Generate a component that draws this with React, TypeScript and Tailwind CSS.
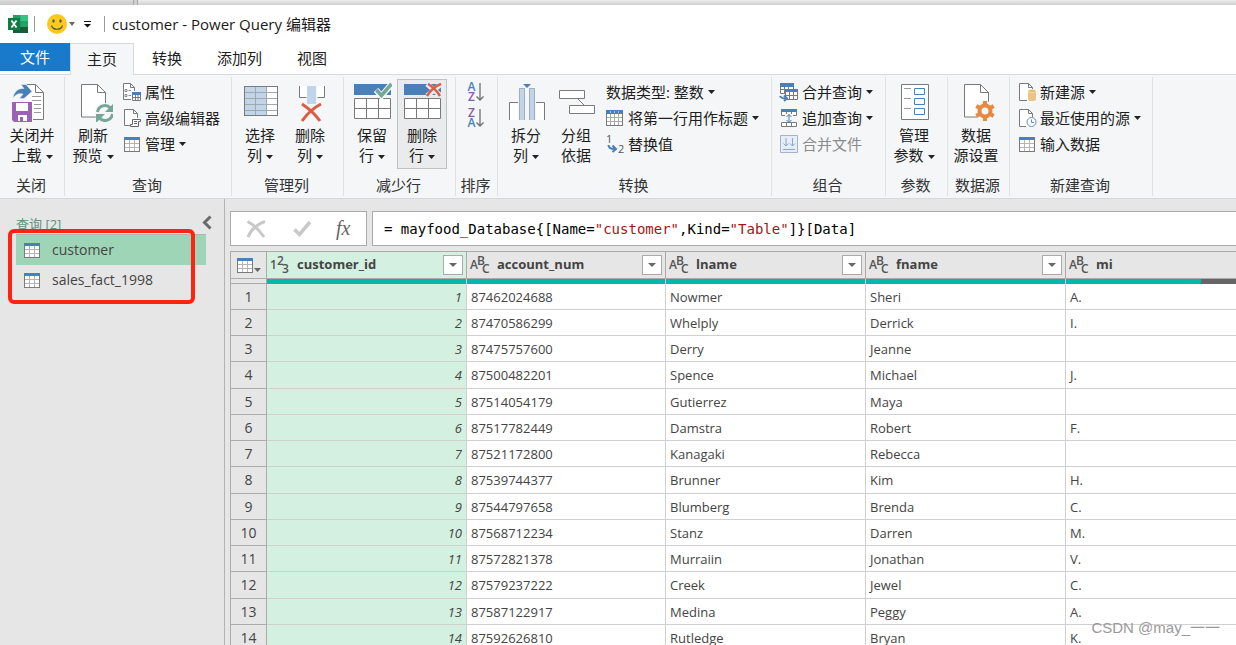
import type { ReactNode } from "react"

const GRAY = "#7a7a7a"
const BLUE = "#4a7fb8"
const LIGHT_BLUE = "#c0d4ea"
const GREEN = "#74a795"
const RED = "#d95f43"

interface IconProps {
  children: ReactNode;
}

function BigIcon({ children }: IconProps) {
  return (
    <svg className="w-10 h-10 shrink-0" viewBox="0 0 40 40" fill="none" aria-hidden="true">
      {children}
    </svg>
  )
}

function SmallIcon({ children }: IconProps) {
  return (
    <svg className="w-[18px] h-[18px] shrink-0 overflow-visible" viewBox="0 0 18 18" fill="none" aria-hidden="true">
      {children}
    </svg>
  )
}

function Caret() {
  return (
    <svg className="inline-block w-[7px] h-1 ml-1 shrink-0 align-middle" viewBox="0 0 7 4" aria-hidden="true">
      <path d="M0 0h7L3.5 4z" fill="#222" />
    </svg>
  )
}

function TableGlyph() {
  return (
    <SmallIcon>
      <rect x="1.5" y="2.5" width="15" height="14" fill="#fff" />
      <path d="M6.5 5v11M11.5 5v11M2 8.5h14M2 12.5h14" stroke="#b4b4b4" />
      <rect x="1.5" y="2.5" width="15" height="14" stroke={GRAY} />
      <path d="M1 2h16v3H1z" fill={BLUE} />
    </SmallIcon>
  )
}

const icons = {
  closeLoad: (
    <BigIcon>
      <path d="M6 2.500h17.500l8 8V37.500H12V2.500z" fill="#fff" />
      <path d="M15 2.500h8.500l8 8V37.500H21" stroke={GRAY} />
      <path d="M23.500 2.500v8h8" stroke={GRAY} />
      <path d="M20 14.500h9M20 18.500h9M22 22.500h7M22 26.500h7M22 30.500h7" stroke="#9a9a9a" />
      <path d="M1 16C2 9 7 6 12 6.500L9 2.500h5l6 7-8 7H7.500L11 12C7 11 4 12 1 16z" fill={BLUE} stroke="#f4f6f8" strokeWidth=".5" />
      <path d="M0 20h20v20H2l-2-2z" fill="#9b62b5" />
      <path d="M4 21h12v8H4zM6 33h9v6H6z" fill="#fff" />
      <path d="M8 35h3v4H8z" fill="#9b62b5" />
    </BigIcon>
  ),
  refresh: (
    <BigIcon>
      <path d="M8.500 2.500h16l8 8v24.500h-24z" fill="#fff" stroke={GRAY} />
      <path d="M24.500 2.500v8h8" stroke={GRAY} />
      <circle cx="32" cy="31" r="10" fill="#f4f6f8" />
      <path d="M24.500 30a7.500 7.500 0 0 1 13-4M39.500 32a7.500 7.500 0 0 1-13 4" stroke={GREEN} strokeWidth="3" />
      <path d="M41 21v9h-9zM23 41v-9h9z" fill={GREEN} />
    </BigIcon>
  ),
  chooseColumns: (
    <BigIcon>
      <rect x="4.500" y="4.500" width="33" height="29" fill="#fff" />
      <path d="M5 5h21v28H5z" fill={LIGHT_BLUE} />
      <path d="M15.500 5v28M26.500 5v28M5 10.500h32M5 16.500h32M5 22.500h32M5 28.500h32" stroke="#a3a8ad" />
      <rect x="4.500" y="4.500" width="33" height="29" stroke={GRAY} />
    </BigIcon>
  ),
  removeColumns: (
    <BigIcon>
      <path d="M9 4h8v12H9zM27 4h8v12h-8z" fill="#fff" />
      <path d="M9.500 4v11.500h7M34.500 4v11.500h-7" stroke={GRAY} />
      <path d="M17 4h9v18h-9z" fill={LIGHT_BLUE} />
      <path d="M12 22c6 4 13 10 18 17M31 22c-8 4-14 10-19 17" stroke={RED} strokeWidth="3" />
    </BigIcon>
  ),
  keepRows: (
    <BigIcon>
      <path d="M2 2h37v11H2z" fill={BLUE} />
      <path d="M2.500 16.500h36v20h-36zM14.500 17v19M26.500 17v19M3 26.500h35" fill="#fff" stroke={GRAY} />
      <path d="M24 8l5.500 6L40 1.500" stroke="#f4f6f8" strokeWidth="6" />
      <path d="M24.500 8l5 5.500L39.500 2" stroke={GREEN} strokeWidth="3.500" />
    </BigIcon>
  ),
  removeRows: (
    <BigIcon>
      <path d="M2 2h37v11H2z" fill={BLUE} />
      <path d="M2.500 16.500h36v20h-36zM14.500 17v19M26.500 17v19M3 26.500h35" fill="#fff" stroke={GRAY} />
      <path d="M25 2l14 12M39 2L25 14" stroke="#ebecee" strokeWidth="5" />
      <path d="M26 2c5 3 9 7 12 12M39 2C33 4 28 9 25 14" stroke={RED} strokeWidth="2.500" />
    </BigIcon>
  ),
  split: (
    <BigIcon>
      <path d="M3.500 38V20.500H12V38M38.500 38V20.500H30V38" fill="#fff" />
      <path d="M3.500 38V20.500H12M38.500 38V20.500H30" stroke={GRAY} />
      <path d="M13 6h6v32h-6zM23 6h6v32h-6z" fill={LIGHT_BLUE} />
      <path d="M13.500 38V6.500h5V38M23.500 38V6.500h5V38" stroke="#a3adb8" />
      <path d="M17 2h8l-4 4z" fill={BLUE} />
    </BigIcon>
  ),
  group: (
    <BigIcon>
      <path d="M3.500 8.500h25v8h-25zM13.500 23.500h25v8h-25z" fill="#fff" stroke={GRAY} />
      <path d="M21.500 16.500l7 7" stroke={GRAY} />
    </BigIcon>
  ),
  params: (
    <BigIcon>
      <path d="M7.500 2.500h27v35h-27z" fill="#fff" stroke={GRAY} />
      <path d="M10 6.500h7M10 16.500h7M10 26.500h7" stroke="#9a9a9a" />
      <path d="M20.500 6.500h10v6h-10zM20.500 16.500h10v6h-10zM20.500 26.500h10v6h-10z" stroke={BLUE} />
    </BigIcon>
  ),
  sourceSettings: (
    <BigIcon>
      <path d="M8.500 2.500h16l8 8v24.500h-24z" fill="#fff" stroke={GRAY} />
      <path d="M24.500 2.500v8h8" stroke={GRAY} />
      <circle cx="29" cy="29" r="10" fill="#f4f6f8" />
      <circle cx="29" cy="29" r="5.500" stroke="#e8893f" strokeWidth="4" />
      <path d="M29 19v4M29 35v4M20.300 24l3.500 2M34.200 32l3.500 2M20.300 34l3.500-2M34.200 26l3.500-2" stroke="#e8893f" strokeWidth="4" />
    </BigIcon>
  ),
  properties: (
    <SmallIcon>
      <path d="M.5.500h7l4 4V16H.500z" fill="#fff" />
      <path d="M8 16.500H.500V.500h7l4 4V8M7.500.500v4h4" stroke={GRAY} />
      <path d="M2 6.500h2v2H2zM2 11.500h2v2H2zM5.500 7.500H8M5.500 12.500H8" stroke="#8a8a8a" />
      <path d="M9.500 9.500h8v8h-8zM12.500 11v6M15 11v6M10 14.500h8" fill="#fff" stroke={GRAY} />
      <path d="M9 9h9v3H9z" fill={BLUE} />
    </SmallIcon>
  ),
  editor: (
    <SmallIcon>
      <path d="M1.500.500h9l4 4V17h-13z" fill="#fff" />
      <path d="M7 16.500H1.500V.500h9l4 4V9M10.500.500v4h4" stroke={GRAY} />
      <path d="M9.500 10.500h8v2h-2v5h-8v-2h2z" fill="#fff" stroke="#666" />
      <path d="M11 12.500h3M11 14.500h3" stroke="#666" />
    </SmallIcon>
  ),
  firstRow: (
    <SmallIcon>
      <rect x=".5" y="1.500" width="16" height="15" fill="#fff" />
      <path d="M4.500 5v11M8.500 5v11M12.500 5v11M1 8.500h15M1 12.500h15" stroke="#aaa" />
      <rect x=".5" y="1.500" width="16" height="15" stroke={GRAY} />
      <path d="M0 1h17v4H0z" fill={BLUE} />
      <path d="M4.500 2v2M8.500 2v2M12.500 2v2" stroke="#fff" opacity=".5" />
    </SmallIcon>
  ),
  replace: (
    <SmallIcon>
      <text x="0" y="8" fontSize="11" fill="#555">1</text>
      <text x="12" y="18" fontSize="11" fill="#555">2</text>
      <path d="M2.500 10c0 3 2 4 6 4M6.500 10.500l3.500 3.500-3.500 3" stroke={BLUE} strokeWidth="2" />
    </SmallIcon>
  ),
  merge: (
    <SmallIcon>
      <path d="M.5.500h13v10H.500zM4.500 3v8M8.500 3v8M1 6.500h12" fill="#fff" stroke={GRAY} />
      <path d="M0 0h14v4H0z" fill={BLUE} />
      <path d="M5.500 6.500h12v10h-12zM9.500 9v7M13.500 9v7M6 12.500h12" fill="#fff" stroke={GRAY} />
      <path d="M5 6h13v3H5z" fill={BLUE} />
      <path d="M0 13c1 2.500 3 2.500 6 2.500M4 12.500l3 3-3 2.500" stroke={BLUE} strokeWidth="2" />
    </SmallIcon>
  ),
  append: (
    <SmallIcon>
      <path d="M1.500.500h15v6h-15zM1.500 13.500h15v4h-15zM6.500 13.500v4M11.500 13.500v4M6.500 3v3M11.500 3v3" fill="#fff" stroke={GRAY} />
      <path d="M1 0h16v3H1z" fill={BLUE} />
      <path d="M5 5h8v8H5z" fill="#f4f6f8" />
      <path d="M9 5.500v8M6.500 8L9 5.500 11.500 8M6.500 11L9 13.500l2.500-2.500" stroke={BLUE} />
    </SmallIcon>
  ),
  combine: (
    <SmallIcon>
      <path d="M.5.500h17v17H.500z" fill="#e6edf7" stroke="#a3b1c9" />
      <path d="M3 14.500h12M6 3v8M3.500 8.500L6 11l2.500-2.500M12.500 3v8M10 8.500l2.500 2.500L15 8.500" stroke="#8ea5cd" />
    </SmallIcon>
  ),
  newSource: (
    <SmallIcon>
      <path d="M1.500.500h9l4 4V17h-13z" fill="#fff" />
      <path d="M9 17.500H1.500V.500h9l4 4V6M10.500.500v4h4" stroke={GRAY} />
      <path d="M10 8v8.500c0 2 8 2 8 0V8z" fill="#ecc584" />
      <ellipse cx="14" cy="8" rx="4" ry="1.500" fill="#e9b765" stroke="#fbeed8" strokeWidth=".6" />
    </SmallIcon>
  ),
  recent: (
    <SmallIcon>
      <path d="M1.500.500h9l4 4V17h-13z" fill="#fff" />
      <path d="M8 17.500H1.500V.500h9l4 4V8M10.500.500v4h4" stroke={GRAY} />
      <circle cx="13.500" cy="13" r="4.500" fill="#fff" stroke="#5f8fc2" />
      <path d="M13.500 10.500V13.500H16" stroke="#5f8fc2" />
    </SmallIcon>
  ),
}

interface SortButtonProps {
  letters: string[];
  label: string;
}

function SortButton({ letters, label }: SortButtonProps) {
  return (
    <button aria-label={label} className="flex items-center h-[26px]">
      <span className="flex flex-col w-[9px] text-[12px] leading-[10px] font-semibold">
        {letters.map((letter) => (
          <span key={letter} className={letter === "A" ? "text-[#4a7fb8]" : "text-[#8a58ad]"}>{letter}</span>
        ))}
      </span>
      <svg className="w-2 h-5" viewBox="0 0 8 20" fill="none" aria-hidden="true">
        <path d="M4 1v17M.5 14.500L4 18l3.500-3.500" stroke="#707070" strokeWidth="1.300" />
      </svg>
    </button>
  )
}

interface BigButtonProps {
  icon: ReactNode;
  lines: string[];
  menu?: boolean;
  active?: boolean;
  wide?: boolean;
}

function BigButton({ icon, lines, menu, active, wide }: BigButtonProps) {
  return (
    <button
      className={`flex flex-col items-center h-[90px] pt-[2px] border leading-5 ${wide ? "w-[58px]" : "w-[50px]"} ${
        active ? "border-[#bfc1c3] bg-[#eaebed]" : "border-transparent"
      }`}
    >
      {icon}
      <span className="mt-[3px] whitespace-nowrap">{lines[0]}</span>
      <span className="whitespace-nowrap">
        {lines[1]}
        {menu && <Caret />}
      </span>
    </button>
  )
}

interface SmallButtonProps {
  icon?: ReactNode;
  label: string;
  menu?: boolean;
  disabled?: boolean;
}

function SmallButton({ icon, label, menu, disabled }: SmallButtonProps) {
  return (
    <button
      disabled={disabled}
      className={`flex items-center h-[26px] px-[5px] whitespace-nowrap ${disabled ? "text-[#8b8b8b]" : ""}`}
    >
      {icon && <span className="mr-1">{icon}</span>}
      {label}
      {menu && <Caret />}
    </button>
  )
}

interface GroupProps {
  title: string;
  width: string;
  children: ReactNode;
}

function Group({ title, width, children }: GroupProps) {
  return (
    <section className={`flex flex-col justify-between shrink-0 my-[2px] border-r border-[#dfe1e3] ${width}`}>
      <div className="flex items-start pt-[2px] pl-[3px]">{children}</div>
      <h2 className="h-[22px] pr-[2px] text-center leading-[22px] text-[#333] whitespace-nowrap">{title}</h2>
    </section>
  )
}

function Column({ children }: IconProps) {
  return <div className="flex flex-col items-start">{children}</div>
}

function Ribbon() {
  return (
    <div className="flex h-[124px] shrink-0 bg-[#f4f6f8] border-b border-[#d5d9dd] text-[#1e1e1e]">
      <Group title="关闭" width="w-[65px]">
        <BigButton icon={icons.closeLoad} lines={["关闭并", "上载"]} menu wide />
      </Group>
      <Group title="查询" width="w-[167px]">
        <BigButton icon={icons.refresh} lines={["刷新", "预览"]} menu />
        <Column>
          <SmallButton icon={icons.properties} label="属性" />
          <SmallButton icon={icons.editor} label="高级编辑器" />
          <SmallButton icon={<TableGlyph />} label="管理" menu />
        </Column>
      </Group>
      <Group title="管理列" width="w-[112px]">
        <BigButton icon={icons.chooseColumns} lines={["选择", "列"]} menu />
        <BigButton icon={icons.removeColumns} lines={["删除", "列"]} menu />
      </Group>
      <Group title="减少行" width="w-[112px]">
        <BigButton icon={icons.keepRows} lines={["保留", "行"]} menu />
        <BigButton icon={icons.removeRows} lines={["删除", "行"]} menu active />
      </Group>
      <Group title="排序" width="w-[42px]">
        <div className="flex flex-col pl-2">
          <SortButton letters={["A", "Z"]} label="升序排序" />
          <SortButton letters={["Z", "A"]} label="降序排序" />
        </div>
      </Group>
      <Group title="转换" width="w-[274px]">
        <BigButton icon={icons.split} lines={["拆分", "列"]} menu />
        <BigButton icon={icons.group} lines={["分组", "依据"]} />
        <Column>
          <SmallButton label="数据类型: 整数" menu />
          <SmallButton icon={icons.firstRow} label="将第一行用作标题" menu />
          <SmallButton icon={icons.replace} label="替换值" />
        </Column>
      </Group>
      <Group title="组合" width="w-[114px]">
        <Column>
          <SmallButton icon={icons.merge} label="合并查询" menu />
          <SmallButton icon={icons.append} label="追加查询" menu />
          <SmallButton icon={icons.combine} label="合并文件" disabled />
        </Column>
      </Group>
      <Group title="参数" width="w-[62px]">
        <BigButton icon={icons.params} lines={["管理", "参数"]} menu />
      </Group>
      <Group title="数据源" width="w-[62px]">
        <BigButton icon={icons.sourceSettings} lines={["数据", "源设置"]} />
      </Group>
      <Group title="新建查询" width="w-[143px]">
        <Column>
          <SmallButton icon={icons.newSource} label="新建源" menu />
          <SmallButton icon={icons.recent} label="最近使用的源" menu />
          <SmallButton icon={<TableGlyph />} label="输入数据" />
        </Column>
      </Group>
    </div>
  )
}

function TitleBar() {
  return (
    <header className="flex items-center h-[38px] shrink-0 pl-2 bg-white">
      <svg className="w-5 h-5" viewBox="0 0 20 20" aria-hidden="true">
        <path d="M5 1h15v18H5z" fill="#21a366" />
        <path d="M12.500 1H20v6h-7.500z" fill="#33c481" />
        <path d="M5 7h7.500v6H5z" fill="#107c41" />
        <path d="M5 13h15v6H5z" fill="#185c37" />
        <path d="M12.500 7H20v6h-7.500z" fill="#21a366" />
        <path d="M0 4h12v12H0z" fill="#107c41" />
        <path d="M3.500 6.500l5 7M8.500 6.500l-5 7" stroke="#fff" strokeWidth="1.800" />
      </svg>
      <span className="w-px h-4 ml-[6px] bg-[#9b9b9b]" />
      <button aria-label="反馈" className="flex items-center ml-3">
        <svg className="w-5 h-5" viewBox="0 0 20 20" aria-hidden="true">
          <circle cx="10" cy="10" r="10" fill="#fcca1b" />
          <ellipse cx="6.500" cy="7" rx="1.200" ry="1.700" fill="#555" />
          <ellipse cx="13.500" cy="7" rx="1.200" ry="1.700" fill="#555" />
          <path d="M4.500 11.500c1.500 5 9.500 5 11 0" fill="none" stroke="#555" strokeWidth="1.200" />
        </svg>
        <svg className="w-[6px] h-1 ml-[2px]" viewBox="0 0 6 4" aria-hidden="true"><path d="M0 0h6L3 4z" fill="#666" /></svg>
      </button>
      <button aria-label="自定义快速访问工具栏" className="ml-[9px]">
        <svg className="w-2 h-2" viewBox="0 0 8 8" aria-hidden="true">
          <path d="M0 1.500h7" stroke="#111" />
          <path d="M0 4h7L3.500 7.500z" fill="#111" />
        </svg>
      </button>
      <span className="w-px h-4 ml-3 bg-[#9b9b9b]" />
      <h1 className="ml-[7px] text-[15px] text-[#1a1a1a]">customer - Power Query 编辑器</h1>
    </header>
  )
}

const tabs = ["转换", "添加列", "视图"]

function Tabs() {
  return (
    <nav className="flex h-8 shrink-0 bg-white text-[#1e1e1e]">
      <div className="w-[70px] border-b border-[#d8dadc]">
        <button className="w-full h-7 bg-[#1979ca] text-white">文件</button>
      </div>
      <button className="w-16 border border-b-0 border-[#d8dadc] bg-[#f4f6f8]">主页</button>
      <div className="flex flex-1 border-b border-[#d8dadc] pl-[18px] gap-[35px]">
        {tabs.map((tab) => (
          <button key={tab}>{tab}</button>
        ))}
      </div>
    </nav>
  )
}

const queries = ["customer", "sales_fact_1998"]

function QueryPane() {
  return (
    <aside className="relative w-[225px] shrink-0 border-r border-[#b3b3b3]">
      <div className="flex justify-between h-[35px] pt-[14px] pl-4 pr-3">
        <h2 className="text-[13px] leading-[22px] text-[#5f9078]">查询 [2]</h2>
        <button aria-label="折叠" className="self-start mt-[2px]">
          <svg className="w-[10px] h-[15px]" viewBox="0 0 10 15" fill="none" aria-hidden="true">
            <path d="M8.500 1.500L2.500 7.500l6 6" stroke="#6a6a6a" strokeWidth="3" />
          </svg>
        </button>
      </div>
      <ul className="ml-4 mr-[18px] border-t border-[#b3b3b3] text-sm text-[#444]">
        {queries.map((name, i) => (
          <li key={name}>
            <button className={`flex items-center w-full h-[30px] pl-[7px] ${i === 0 ? "bg-[#9fd5b7]" : ""}`}>
              <TableGlyph />
              <span className="ml-[11px] leading-[30px]">{name}</span>
            </button>
          </li>
        ))}
      </ul>
      <div className="absolute left-2 top-[30px] w-[187px] h-[75px] border-4 border-[#ff2311] rounded-md pointer-events-none" />
    </aside>
  )
}

function FormulaBar() {
  return (
    <div className="flex h-[35px] gap-[5px]">
      <div className="flex items-center w-[137px] shrink-0 border border-[#ababab] bg-white pl-[15px]">
        <button aria-label="取消">
          <svg className="w-5 h-5" viewBox="0 0 20 20" fill="none" aria-hidden="true">
            <path d="M1.500 2.500C8 6 14 12 18 18M19 2.500C11 5 5 11 2 18" stroke="#c8c8c8" strokeWidth="3" />
          </svg>
        </button>
        <button aria-label="提交" className="ml-[27px]">
          <svg className="w-5 h-5" viewBox="0 0 20 20" fill="none" aria-hidden="true">
            <path d="M1.500 10.500l5 5L17 3" stroke="#c8c8c8" strokeWidth="3.500" />
          </svg>
        </button>
        <button aria-label="插入步骤" className="ml-[23px] pb-[2px] font-['Liberation_Serif',serif] italic text-[20px] leading-6 text-[#666]">fx</button>
      </div>
      <div
        role="textbox"
        aria-label="公式"
        contentEditable
        suppressContentEditableWarning
        className="flex-1 border border-r-0 border-[#ababab] bg-white pl-[11px] leading-[34px] whitespace-pre text-black font-['DejaVu_Sans_Mono',monospace] text-sm"
      >
        = mayfood_Database{"{"}[Name=<span className="text-[#a31515]">"customer"</span>,Kind=<span className="text-[#a31515]">"Table"</span>]{"}"}[Data]
      </div>
    </div>
  )
}

interface TypeIconProps {
  chars: string;
}

// three small characters on staggered baselines: 1²3 or AᴮC
function TypeIcon({ chars }: TypeIconProps) {
  return (
    <svg className="w-5 h-5 shrink-0 overflow-visible" viewBox="0 0 20 20" aria-hidden="true">
      <g fontSize="12" fontWeight="600" fill="#555">
        <text x="0" y="14">{chars[0]}</text>
        <text x="7" y="10">{chars[1]}</text>
        <text x="12" y="18">{chars[2]}</text>
      </g>
    </svg>
  )
}

const columns = ["customer_id", "account_num", "lname", "fname", "mi"]

const rows = [
  ["1", "87462024688", "Nowmer", "Sheri", "A."],
  ["2", "87470586299", "Whelply", "Derrick", "I."],
  ["3", "87475757600", "Derry", "Jeanne", ""],
  ["4", "87500482201", "Spence", "Michael", "J."],
  ["5", "87514054179", "Gutierrez", "Maya", ""],
  ["6", "87517782449", "Damstra", "Robert", "F."],
  ["7", "87521172800", "Kanagaki", "Rebecca", ""],
  ["8", "87539744377", "Brunner", "Kim", "H."],
  ["9", "87544797658", "Blumberg", "Brenda", "C."],
  ["10", "87568712234", "Stanz", "Darren", "M."],
  ["11", "87572821378", "Murraiin", "Jonathan", "V."],
  ["12", "87579237222", "Creek", "Jewel", "C."],
  ["13", "87587122917", "Medina", "Peggy", "A."],
  ["14", "87592626810", "Rutledge", "Bryan", "K."],
]

function DataTable() {
  return (
    <table className="table-fixed w-[1036px] mt-[5px] border-separate border-spacing-0 border-t border-[#ababab] text-[13px] text-[#444]">
      <colgroup>
        <col className="w-[37px]" />
        <col className="w-[200px]" />
        <col className="w-[199px]" />
        <col className="w-[200px]" />
        <col className="w-[200px]" />
        <col className="w-[200px]" />
      </colgroup>
      <thead>
        <tr className="h-[27px]">
          <th className="p-0 border-x border-b border-[#ababab] bg-[#e6e6e6]">
            <button aria-label="表" className="flex items-end pl-[5px]">
              <TableGlyph />
              <svg className="w-[7px] h-1 mb-[2px]" viewBox="0 0 7 4" aria-hidden="true"><path d="M0 0h7L3.500 4z" fill="#666" /></svg>
            </button>
          </th>
          {columns.map((name, i) => (
            <th key={name} className={`p-0 border-r border-b border-[#ababab] ${i === 0 ? "bg-[#d4f0e0]" : "bg-[#e6e6e6]"}`}>
              <div className="flex items-center h-[26px] pl-[3px] pr-[3px]">
                <TypeIcon chars={i === 0 ? "123" : "ABC"} />
                <span className="ml-[7px] font-bold">{name}</span>
                <button aria-label={`筛选 ${name}`} className="flex items-center justify-center w-5 h-5 ml-auto border border-[#ababab] bg-white">
                  <svg className="w-2 h-1" viewBox="0 0 8 4" aria-hidden="true"><path d="M0 0h8L4 4z" fill="#666" /></svg>
                </button>
              </div>
            </th>
          ))}
        </tr>
        <tr className="h-[5px]">
          <td className="p-0 border-x border-b border-[#ababab] bg-[#e6e6e6]" />
          {columns.map((name) => (
            <td key={name} className="p-0 border-r border-[#d0d0d0] bg-[#666]">
              <div className={`h-[5px] bg-[#01b8aa] ${name === "mi" ? "w-[135px]" : ""}`} />
            </td>
          ))}
        </tr>
      </thead>
      <tbody>
        {rows.map((row, r) => (
          <tr key={row[0]} className={r % 4 === 3 ? "h-[27px]" : "h-[26px]"}>
            <th className="p-0 border-x border-b border-[#ababab] bg-[#e6e6e6] text-sm leading-5 font-normal">{r + 1}</th>
            {row.map((cell, c) => (
              <td
                key={c}
                className={`px-1 py-0 border-r border-b border-[#d0d0d0] leading-5 ${c === 0 ? "bg-[#d4f0e0] text-right italic" : "bg-white"}`}
              >
                {cell}
              </td>
            ))}
          </tr>
        ))}
      </tbody>
    </table>
  )
}

export default function App() {
  return (
    <div className="relative flex flex-col h-screen overflow-hidden bg-[#e6e6e6] text-[15px] font-['Open_Sans','Noto_Sans_CJK_SC',sans-serif]">
      <div className="flex h-[5px] shrink-0 bg-linear-to-b from-[#dcdcdc] to-[#c8c8c8]">
        <span className="w-[5px] ml-[133px] border-x border-[#a8a8a8] bg-[#d0d0d0]" />
        <span className="flex-1 bg-linear-to-b from-[#ececec] to-[#cfcfcf]" />
      </div>
      <TitleBar />
      <Tabs />
      <Ribbon />
      <div className="flex flex-1 min-h-0">
        <QueryPane />
        <main className="flex-1 min-w-0 overflow-hidden pt-3 pl-[5px]">
          <FormulaBar />
          <DataTable />
        </main>
      </div>
      <div className="absolute right-4 bottom-[6px] font-['Liberation_Sans','Noto_Sans_CJK_SC',sans-serif] text-[15px] text-[#999] pointer-events-none">
        CSDN @may_一一
      </div>
    </div>
  )
}
